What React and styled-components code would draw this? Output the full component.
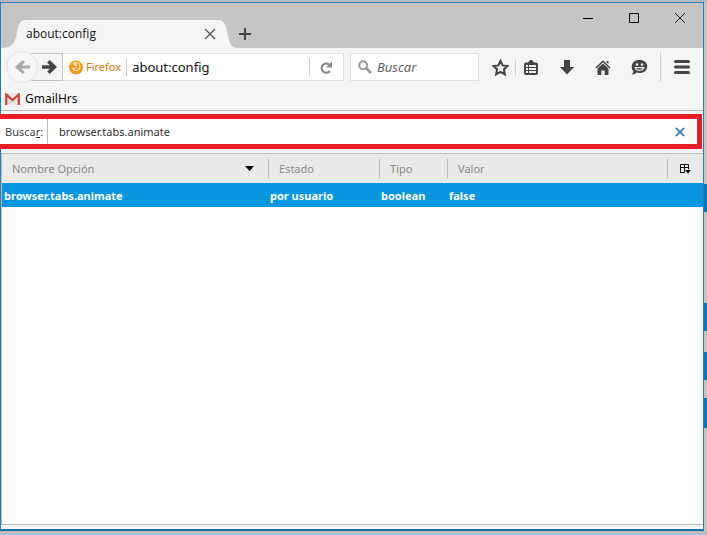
import React, { useState } from "react";
import styled, { createGlobalStyle } from "styled-components";

const GlobalStyle = createGlobalStyle`
  * { box-sizing: border-box; }
  body { margin: 0; background: #b9bcc2; font: 12px/16px "Noto Sans", "Open Sans", sans-serif; color: #111; }
  button { padding: 0; border: 0; background: none; font: inherit; color: inherit; }
  input { min-width: 0; border: 0; outline: 0; background: none; font: inherit; color: inherit; }
  svg { display: block; flex: none; }
`;

const Desktop = styled.div`
  display: flex;
  height: 100vh;
  padding: 2px 0 4px;
`;

const Backdrop = styled.div`
  display: flex;
  flex-direction: column;
  width: 3px;
  padding-top: 182px;
  background: #c3c3c5;
`;

const BackdropBar = styled.div`
  height: ${(p) => p.$height}px;
  margin-bottom: ${(p) => p.$gap}px;
  background: #0b76b5;
`;

const Window = styled.main`
  flex: 1;
  min-width: 0;
  display: flex;
  flex-direction: column;
  background: #f5f5f5;
  border: 1px solid #2b7fb8;
  border-bottom: 2px solid #1f6f9f;
`;

const TitleBar = styled.header`
  display: flex;
  align-items: flex-end;
  height: 45px;
  background: #c5c5c5;
`;

const Tab = styled.div`
  display: flex;
  height: 28px;
`;

const TabBody = styled.div`
  display: flex;
  align-items: center;
  justify-content: space-between;
  width: 192px;
  background: #f5f5f5;
`;

const TabTitle = styled.span`
  font-family: "Open Sans", sans-serif;
`;

const TabClose = styled.button`
  width: 12px;
  margin-right: 2px;
`;

const NewTab = styled.button`
  align-self: flex-end;
  padding: 0 0 8px;
`;

const WindowControls = styled.div`
  display: flex;
  align-self: flex-start;
  margin-left: auto;
  padding-top: 9px;
`;

const WindowButton = styled.button`
  display: grid;
  place-items: center;
  width: 46px;
  height: 12px;
`;

const NavBar = styled.nav`
  display: flex;
  align-items: center;
  height: 38px;
  color: #444;
`;

const BackButton = styled.button`
  z-index: 1;
  display: grid;
  place-items: center;
  flex: none;
  width: 32px;
  height: 32px;
  margin-left: 5px;
  border: 1px solid #e4e4e4;
  border-radius: 50%;
  background: #f7f7f7;
  color: #aaa;
`;

const ForwardButton = styled.button`
  display: grid;
  place-items: center;
  flex: none;
  width: 32px;
  height: 28px;
  margin-left: -7px;
  padding-left: 6px;
  border: 1px solid #c4c4c4;
  border-left: 0;
`;

const Field = styled.div`
  display: flex;
  align-items: center;
  height: 28px;
  background: #fff;
  border: 1px solid #e2e2e2;
`;

const UrlField = styled(Field)`
  flex: 1;
  min-width: 0;
  border-left: 0;
`;

const Identity = styled.button`
  display: flex;
  align-items: center;
  gap: 3px;
  height: 18px;
  padding: 0 5px 0 6px;
  border-right: 1px solid #ccc;
  color: #d27e0c;
  font-size: 11px;
`;

const UrlInput = styled.input`
  flex: 1;
  height: 26px;
  padding: 0 5px;
  font-size: 13px;
  color: #111;
`;

const ReloadButton = styled.button`
  display: grid;
  place-items: center;
  width: 34px;
  height: 18px;
  border-left: 1px solid #ccc;
  color: #888;
`;

const SearchField = styled(Field)`
  width: 129px;
  margin-left: 6px;
  padding-left: 7px;
  gap: 5px;
  color: #999;
`;

const SearchInput = styled.input`
  flex: 1;
  padding: 0;
  font-size: 13px;
  &::placeholder { color: #666; font-style: italic; opacity: 1; }
`;

const ToolButton = styled.button`
  display: grid;
  place-items: center;
  flex: none;
  width: ${(p) => p.$width}px;
  height: 26px;
`;

const StarButton = styled(ToolButton)`
  padding-left: 6px;
`;

const Divider = styled.span`
  width: 1px;
  height: ${(p) => p.$height}px;
  background: #d2d2d2;
`;

const Bookmarks = styled.div`
  display: flex;
  height: 25px;
  padding: 1px 4px 0;
  border-bottom: 1px solid #bbb;
`;

const Bookmark = styled.a`
  display: flex;
  align-items: center;
  gap: 5px;
  color: #111;
  text-decoration: none;
`;

const FilterBar = styled.form`
  z-index: 1;
  display: flex;
  align-items: center;
  height: 35px;
  margin: 3px 1px 4px -1px;
  border: 5px solid #e81c24;
  border-left: 0;
  background: #fff;
  font-size: 11px;
`;

const FilterLabel = styled.label`
  display: flex;
  align-items: center;
  width: 48px;
  height: 25px;
  padding-left: 5px;
  border-right: 1px solid #bbb;
  color: #444;
  white-space: pre;
`;

const FilterInput = styled.input`
  flex: 1;
  padding: 0 11px;
  color: #333;
`;

const ClearButton = styled.button`
  padding: 0 12px 0 0;
`;

const Content = styled.section`
  flex: 1;
  margin-bottom: 4px;
  border: 1px solid #b8bcc0;
  border-width: 1px 0 1px 1px;
  background: #fff;
`;

const PrefTable = styled.table`
  width: 100%;
  table-layout: fixed;
  border-collapse: collapse;
  font-size: 11px;
`;

const Column = styled.col`
  width: ${(p) => p.$width};
`;

const HeadCell = styled.th`
  height: 29px;
  padding: 0;
  background: #eaeaea;
  color: #888;
  font-weight: 400;
  text-align: left;
`;

const HeadButton = styled.button`
  display: flex;
  align-items: center;
  justify-content: space-between;
  width: 100%;
  height: 19px;
  padding: 0 14px 0 10px;
  border-left: 1px solid #bbb;
`;

const SortButton = styled(HeadButton)`
  border-left: 0;
`;

const PickerButton = styled(HeadButton)`
  padding: 0 0 0 12px;
`;

const PrefRow = styled.tr`
  height: 24px;
  background: #0896e0;
  color: #fff;
  font-weight: 700;
`;

const PrefCell = styled.td`
  padding: 2px 2px 0;
  white-space: nowrap;
`;

const Arrow = ({ flip }) => (
  <svg width="15" height="14" viewBox="0 0 15 14" fill="currentColor">
    <path d={flip ? "M15 5.5H6.5L10 2 7.6 0 0 7l7.6 7L10 12 6.5 8.5H15Z" : "M0 5.3h8L5.2 2.5 7.7 0 15 7l-7.3 7-2.5-2.5L8 8.7H0Z"} />
  </svg>
);

const Cross = ({ size, color = "#222", width = 1 }) => (
  <svg width={size} height={size} viewBox="0 0 12 12" fill="none" stroke={color} strokeWidth={width}>
    <path d="M1 1l10 10M11 1L1 11" />
  </svg>
);

const FirefoxMark = () => (
  <svg width="14" height="15" viewBox="0 0 14 15">
    <circle cx="7" cy="7.5" r="7" fill="#f59a16" />
    <path d="M3.800 3.200C6 1.300 9.500 1.800 11 4.200c1.600 3-.2 6.600-3.600 6.900C5 11.300 3.200 9.800 3.300 7.600l2.400.6L7.600 6.800 5.300 5.600Z" fill="#ffe5b2" />
    <path d="M7.500 2.500c2.500 1 3.800 4.400 1.200 6.700-1 .8-2.500.8-3.200 0 2.600-.1 3.500-3.600 2-6.700Z" fill="#f08a08" />
    <path d="M1 3.2L3 1l.7 2.1L2 6Z" fill="#f9b52c" />
  </svg>
);

const Reload = () => (
  <svg width="13" height="13" viewBox="0 0 13 13" fill="none">
    <path d="M9.800 10A4.600 4.600 0 1 1 9 3.400" stroke="currentColor" strokeWidth="2.200" />
    <path d="M12 .5v6H6.2Z" fill="currentColor" />
  </svg>
);

const Magnifier = () => (
  <svg width="14" height="14" viewBox="0 0 14 14" fill="none" stroke="currentColor">
    <circle cx="5.2" cy="5.2" r="4" strokeWidth="2" />
    <path d="M8.2 8.2l4.8 4.8" strokeWidth="2.6" />
  </svg>
);

const Star = () => (
  <svg width="17" height="17" viewBox="0 0 17 17">
    <path d="M8.500 1.800l2.100 4.600 4.900.6-3.600 3.400 1 5-4.400-2.500-4.400 2.500 1-5L1.500 7l4.900-.6Z" fill="none" stroke="currentColor" strokeWidth="2" />
  </svg>
);

const Clipboard = () => (
  <svg width="14" height="15" viewBox="0 0 14 15">
    <path d="M4 2.500L6 0h2l2 2.500h2a2 2 0 0 1 2 2V13a2 2 0 0 1-2 2H2a2 2 0 0 1-2-2V4.500a2 2 0 0 1 2-2Z" fill="currentColor" />
    <path d="M2 5h2v2H2zM5 5h7v2H5zM2 8h2v2H2zM5 8h7v2H5zM2 11h2v2H2zM5 11h7v2H5z" fill="#f5f5f5" />
  </svg>
);

const Download = () => (
  <svg width="14" height="15" viewBox="0 0 14 15">
    <path d="M4 0h6v7h4l-7 7.500L0 7h4Z" fill="currentColor" />
  </svg>
);

const Home = () => (
  <svg width="16" height="15" viewBox="0 0 16 15">
    <path d="M1 8L8 1.300 15 8" fill="none" stroke="currentColor" strokeWidth="1.500" />
    <path d="M2.500 8.600L8 3.400l5.500 5.200V15H9.700v-4.500H6.300V15H2.500ZM11.500 1h2v3l-2-1.800Z" fill="currentColor" />
  </svg>
);

const Chat = () => (
  <svg width="17" height="15" viewBox="0 0 17 15">
    <path d="M8.500 0c4.500 0 7.800 2.700 7.800 6.500S13 13 8.500 13c-1 0-2-.1-2.800-.4C4.500 14 2.500 14.700.8 14.300c1.200-.8 1.600-1.900 1.500-3A6 6 0 0 1 .7 6.500C.7 2.700 4 0 8.500 0Z" fill="currentColor" />
    <path d="M3.300 7h10.400c-.6 2.500-2.600 4-5.200 4S3.900 9.500 3.300 7Z" fill="#f5f5f5" />
    <path d="M5 8.300h7c-.8 1-2 1.500-3.500 1.500S5.800 9.300 5 8.300Z" fill="currentColor" />
    <circle cx="6" cy="4.500" r="1.300" fill="#f5f5f5" />
    <circle cx="11" cy="4.500" r="1.300" fill="#f5f5f5" />
  </svg>
);

const Burger = () => (
  <svg width="16" height="14" viewBox="0 0 16 14" stroke="currentColor" strokeWidth="3" strokeLinecap="round">
    <path d="M1.500 1.500h13M1.500 7h13M1.500 12.500h13" />
  </svg>
);

const GmailMark = () => (
  <svg width="15" height="12" viewBox="0 0 15 12">
    <path d="M1 .5h13v11H1Z" fill="#e6e3e3" />
    <path d="M1.200 12V1.500L7.500 7l6.300-5.500V12" fill="none" stroke="#cf4237" strokeWidth="2.200" />
  </svg>
);

const ColumnPicker = () => (
  <svg width="11" height="10" viewBox="0 0 11 10">
    <path d="M.5 8.500v-8h8v5M0 3.500h9M4.500.5v8M0 8.500h5" fill="none" stroke="#111" />
    <path d="M5 6h6L8 9.500Z" fill="#111" />
  </svg>
);

const prefs = [{ name: "browser.tabs.animate", status: "por usuario", type: "boolean", value: "false" }];

const backdropBars = [
  { height: 28, gap: 91 },
  { height: 28, gap: 21 },
  { height: 28, gap: 18 },
  { height: 30, gap: 0 },
];

export default function App() {
  const [url, setUrl] = useState("about:config");
  const [filter, setFilter] = useState("browser.tabs.animate");

  return (
    <Desktop>
      <GlobalStyle />
      <Window>
        <TitleBar>
          <Tab>
            <svg width="25" height="28" viewBox="0 0 25 28" fill="#f5f5f5">
              <path d="M0 28C9 28 13 25 15 17C17 6 18 0 25 0V28Z" />
            </svg>
            <TabBody>
              <TabTitle>about:config</TabTitle>
              <TabClose aria-label="Cerrar pestaña"><Cross size={12} color="#555" width={1.2} /></TabClose>
            </TabBody>
            <svg width="21" height="28" viewBox="0 0 21 28" fill="#f5f5f5">
              <path d="M0 0C7 0 8 6 10 16C12 25 14 28 21 28H0Z" />
            </svg>
          </Tab>
          <NewTab aria-label="Nueva pestaña">
            <svg width="12" height="12" viewBox="0 0 12 12" stroke="#444" strokeWidth="2"><path d="M6 0v12M0 6h12" /></svg>
          </NewTab>
          <WindowControls>
            <WindowButton aria-label="Minimizar">
              <svg width="10" height="11" viewBox="0 0 10 11" stroke="#000"><path d="M0 5.500h10" /></svg>
            </WindowButton>
            <WindowButton aria-label="Maximizar">
              <svg width="10" height="10" viewBox="0 0 10 10" fill="none" stroke="#000"><path d="M.5.5h9v9h-9Z" /></svg>
            </WindowButton>
            <WindowButton aria-label="Cerrar"><Cross size={12} /></WindowButton>
          </WindowControls>
        </TitleBar>

        <NavBar>
          <BackButton aria-label="Atrás"><Arrow flip /></BackButton>
          <ForwardButton aria-label="Adelante"><Arrow /></ForwardButton>
          <UrlField>
            <Identity><FirefoxMark />Firefox</Identity>
            <UrlInput aria-label="Dirección" value={url} onChange={(e) => setUrl(e.target.value)} />
            <ReloadButton aria-label="Recargar"><Reload /></ReloadButton>
          </UrlField>
          <SearchField>
            <Magnifier />
            <SearchInput aria-label="Buscar" placeholder="Buscar" />
          </SearchField>
          <StarButton aria-label="Añadir a marcadores" $width={36}><Star /></StarButton>
          <Divider $height={17} />
          <ToolButton aria-label="Marcadores" $width={30}><Clipboard /></ToolButton>
          <ToolButton aria-label="Descargas" $width={42}><Download /></ToolButton>
          <ToolButton aria-label="Inicio" $width={30}><Home /></ToolButton>
          <ToolButton aria-label="Hello" $width={42}><Chat /></ToolButton>
          <Divider $height={30} />
          <ToolButton aria-label="Abrir menú" $width={42}><Burger /></ToolButton>
        </NavBar>

        <Bookmarks>
          <Bookmark href="#gmail"><GmailMark />GmailHrs</Bookmark>
        </Bookmarks>

        <FilterBar onSubmit={(e) => e.preventDefault()}>
          <FilterLabel htmlFor="filter">Busca<u>r</u>:</FilterLabel>
          <FilterInput id="filter" value={filter} onChange={(e) => setFilter(e.target.value)} />
          <ClearButton type="button" aria-label="Borrar" onClick={() => setFilter("")}>
            <Cross size={10} color="#2f78ad" width={2} />
          </ClearButton>
        </FilterBar>

        <Content>
          <PrefTable>
            <colgroup>
              <Column $width="266px" />
              <Column $width="111px" />
              <Column $width="68px" />
              <Column $width="auto" />
              <Column $width="36px" />
            </colgroup>
            <thead>
              <tr>
                <HeadCell>
                  <SortButton>
                    Nombre Opción
                    <svg width="9" height="5" viewBox="0 0 9 5"><path d="M0 0h9L4.500 5Z" fill="#000" /></svg>
                  </SortButton>
                </HeadCell>
                <HeadCell><HeadButton>Estado</HeadButton></HeadCell>
                <HeadCell><HeadButton>Tipo</HeadButton></HeadCell>
                <HeadCell><HeadButton>Valor</HeadButton></HeadCell>
                <HeadCell><PickerButton aria-label="Seleccionar columnas"><ColumnPicker /></PickerButton></HeadCell>
              </tr>
            </thead>
            <tbody>
              {prefs.map((p) => (
                <PrefRow key={p.name}>
                  <PrefCell>{p.name}</PrefCell>
                  <PrefCell>{p.status}</PrefCell>
                  <PrefCell>{p.type}</PrefCell>
                  <PrefCell colSpan={2}>{p.value}</PrefCell>
                </PrefRow>
              ))}
            </tbody>
          </PrefTable>
        </Content>
      </Window>
      <Backdrop>
        {backdropBars.map((bar, i) => (
          <BackdropBar key={i} $height={bar.height} $gap={bar.gap} />
        ))}
      </Backdrop>
    </Desktop>
  );
}
